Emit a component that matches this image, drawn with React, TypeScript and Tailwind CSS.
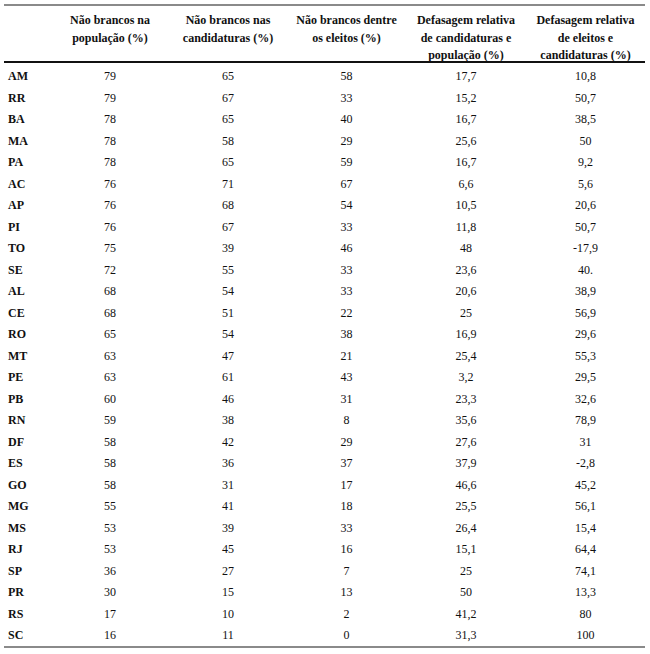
const HEADERS = [
  ["Não brancos na", "população (%)"],
  ["Não brancos nas", "candidaturas (%)"],
  ["Não brancos dentre", "os eleitos (%)"],
  ["Defasagem relativa", "de candidaturas e", "população (%)"],
  ["Defasagem relativa", "de eleitos e", "candidaturas (%)"],
];

const ROWS: [string, string, string, string, string, string][] = [
  ["AM", "79", "65", "58", "17,7", "10,8"],
  ["RR", "79", "67", "33", "15,2", "50,7"],
  ["BA", "78", "65", "40", "16,7", "38,5"],
  ["MA", "78", "58", "29", "25,6", "50"],
  ["PA", "78", "65", "59", "16,7", "9,2"],
  ["AC", "76", "71", "67", "6,6", "5,6"],
  ["AP", "76", "68", "54", "10,5", "20,6"],
  ["PI", "76", "67", "33", "11,8", "50,7"],
  ["TO", "75", "39", "46", "48", "-17,9"],
  ["SE", "72", "55", "33", "23,6", "40."],
  ["AL", "68", "54", "33", "20,6", "38,9"],
  ["CE", "68", "51", "22", "25", "56,9"],
  ["RO", "65", "54", "38", "16,9", "29,6"],
  ["MT", "63", "47", "21", "25,4", "55,3"],
  ["PE", "63", "61", "43", "3,2", "29,5"],
  ["PB", "60", "46", "31", "23,3", "32,6"],
  ["RN", "59", "38", "8", "35,6", "78,9"],
  ["DF", "58", "42", "29", "27,6", "31"],
  ["ES", "58", "36", "37", "37,9", "-2,8"],
  ["GO", "58", "31", "17", "46,6", "45,2"],
  ["MG", "55", "41", "18", "25,5", "56,1"],
  ["MS", "53", "39", "33", "26,4", "15,4"],
  ["RJ", "53", "45", "16", "15,1", "64,4"],
  ["SP", "36", "27", "7", "25", "74,1"],
  ["PR", "30", "15", "13", "50", "13,3"],
  ["RS", "17", "10", "2", "41,2", "80"],
  ["SC", "16", "11", "0", "31,3", "100"],
];

const COLS = "grid grid-cols-[47px_118px_118px_119px_120px_119px]";

export default function App() {
  return (
    <div className="h-[654px] w-[650px] bg-white pl-[4px] pt-[4px] font-['Liberation_Serif',_'Times_New_Roman',_serif] text-[12px] text-[#111]">
      <div className="w-[641px] border-y-2 border-[#8a8a8a]">
        <div className={`${COLS} h-[57px] border-b-2 border-[#111] pt-[6px] font-bold leading-[17.5px]`}>
          <div />
          {HEADERS.map((lines, i) => (
            <div key={i} className="flex flex-col items-center text-center">
              {lines.map((l) => (
                <span key={l}>{l}</span>
              ))}
            </div>
          ))}
        </div>
        <div className="pt-[2px]">
          {ROWS.map((r) => (
            <div key={r[0]} className={`${COLS} h-[21.5px] items-center pt-[1px] leading-none`}>
              <div className="pl-[4px] font-bold">{r[0]}</div>
              {r.slice(1).map((v, i) => (
                <div key={i} className="text-center">
                  {v}
                </div>
              ))}
            </div>
          ))}
        </div>
      </div>
    </div>
  );
}
